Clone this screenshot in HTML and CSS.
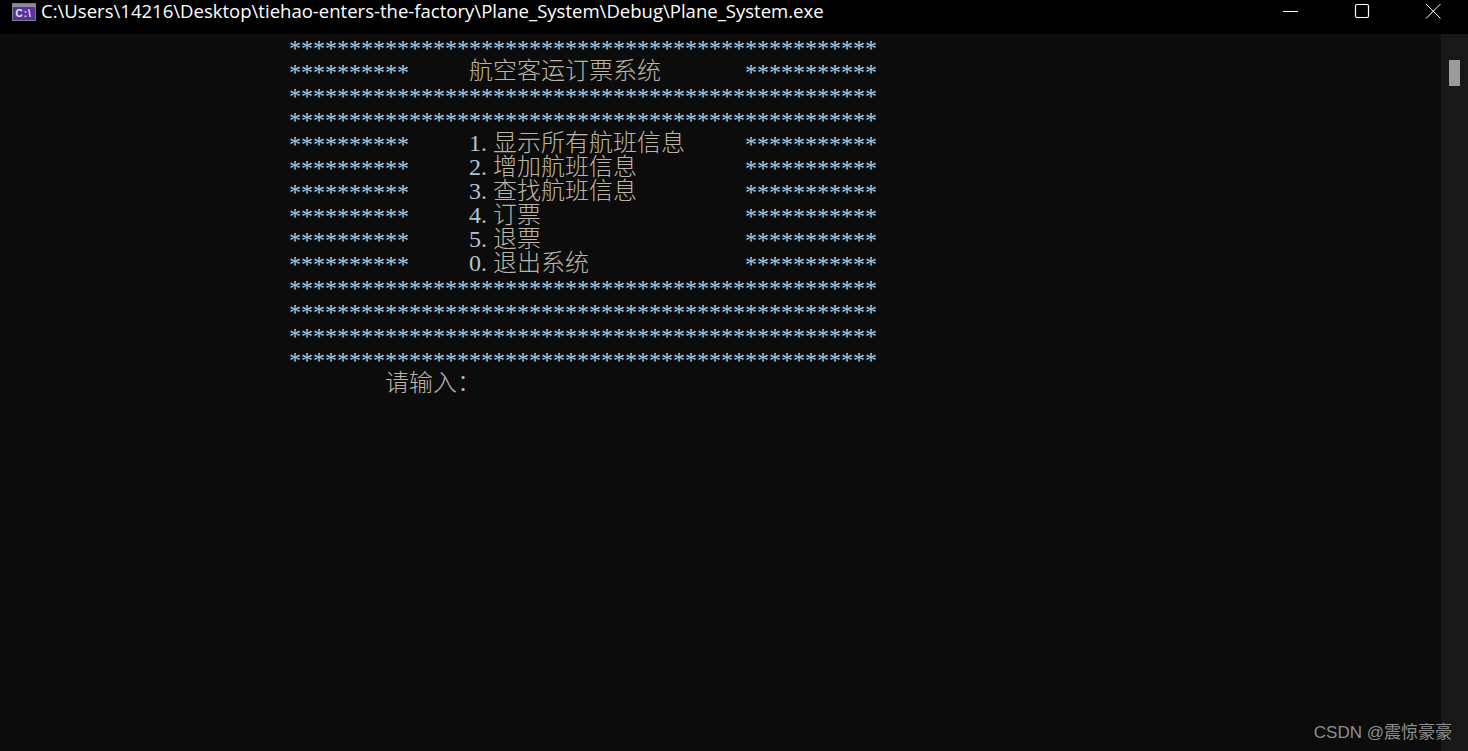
FILE: index.html
```html
<!DOCTYPE html>
<html lang="zh-CN">
<head>
<meta charset="utf-8">
<title>Plane_System</title>
<link rel="stylesheet" href="styles.css">
</head>
<body>
<div class="window">
  <header class="titlebar">
    <svg class="app-icon" width="24" height="18" viewBox="0 0 24 18">
      <rect x="0.5" y="0.5" width="23" height="17" fill="#5a3399" stroke="#7d7b86"/>
      <rect x="1" y="1" width="22" height="3" fill="#8f8aa0"/>
      <text x="3.5" y="14" class="app-icon-text">C:\</text>
    </svg>
    <span class="title">C:\Users\14216\Desktop\tiehao-enters-the-factory\Plane_System\Debug\Plane_System.exe</span>
    <div class="controls">
      <div class="control">
        <svg width="16" height="16" viewBox="0 0 16 16"><path d="M0 8.5H15" stroke="#fff" fill="none"/></svg>
      </div>
      <div class="control">
        <svg width="16" height="16" viewBox="0 0 16 16"><rect x="1.5" y="1.5" width="13" height="13" rx="1.5" stroke="#fff" stroke-width="1.2" fill="none"/></svg>
      </div>
      <div class="control">
        <svg width="16" height="16" viewBox="0 0 16 16"><path d="M1 1L15.5 15.5M15.5 1L1 15.5" stroke="#fff" fill="none"/></svg>
      </div>
    </div>
  </header>
  <div class="content">
    <main class="console">
<div class="line"><span class="stars">*************************************************</span></div>
<div class="line"><span class="stars">**********</span>     <span class="cjk">航空客运订票系统</span>       <span class="stars">***********</span></div>
<div class="line"><span class="stars">*************************************************</span></div>
<div class="line"><span class="stars">*************************************************</span></div>
<div class="line"><span class="stars">**********</span>     <span class="num">1.</span><span class="cjk">显示所有航班信息</span>     <span class="stars">***********</span></div>
<div class="line"><span class="stars">**********</span>     <span class="num">2.</span><span class="cjk">增加航班信息</span>         <span class="stars">***********</span></div>
<div class="line"><span class="stars">**********</span>     <span class="num">3.</span><span class="cjk">查找航班信息</span>         <span class="stars">***********</span></div>
<div class="line"><span class="stars">**********</span>     <span class="num">4.</span><span class="cjk">订票</span>                 <span class="stars">***********</span></div>
<div class="line"><span class="stars">**********</span>     <span class="num">5.</span><span class="cjk">退票</span>                 <span class="stars">***********</span></div>
<div class="line"><span class="stars">**********</span>     <span class="num">0.</span><span class="cjk">退出系统</span>             <span class="stars">***********</span></div>
<div class="line"><span class="stars">*************************************************</span></div>
<div class="line"><span class="stars">*************************************************</span></div>
<div class="line"><span class="stars">*************************************************</span></div>
<div class="line"><span class="stars">*************************************************</span></div>
<div class="line">        <span class="cjk">请输入：</span></div>
    </main>
    <aside class="scrollbar"><div class="thumb"></div></aside>
  </div>
  <div class="watermark">CSDN @震惊豪豪</div>
</div>
</body>
</html>
```
FILE: styles.css
```css
html, body {
  margin: 0;
  padding: 0;
  background: #0c0c0c;
}
.window {
  position: relative;
  width: 1468px;
  height: 751px;
  overflow: hidden;
  display: flex;
  flex-direction: column;
}
.titlebar {
  height: 34px;
  flex: none;
  background: #000;
  display: flex;
  align-items: flex-start;
  padding-left: 12px;
  color: #fff;
}
.app-icon { flex: none; margin-top: 3px; }
.app-icon-text {
  font-family: "Liberation Sans", sans-serif;
  font-size: 10px;
  font-weight: 700;
  letter-spacing: 1px;
  fill: #e8e4f2;
}
.title {
  margin-left: 5px;
  font-family: "Open Sans", sans-serif;
  font-size: 18.55px;
  line-height: 22px;
  white-space: nowrap;
}
.controls {
  margin-left: auto;
  display: flex;
  height: 100%;
}
.control {
  width: 71px;
  display: flex;
  align-items: flex-start;
  justify-content: center;
  padding-top: 3px;
}
.content {
  flex: 1;
  display: flex;
  min-height: 0;
}
.console {
  flex: 1;
  padding: 2px 0 0 289px;
  font-family: "Liberation Mono", monospace;
  font-size: 20px;
  color: #b4bcc4;
}
.line {
  height: 24px;
  line-height: 24px;
  white-space: pre;
}
.stars {
  font-family: "Liberation Serif", serif;
  font-size: 24px;
  line-height: 0;
  vertical-align: -3px;
  color: #b6c6d4;
}
.num {
  display: inline-block;
  width: 24px;
  font-family: "Liberation Serif", serif;
  font-size: 24px;
  line-height: 0;
  vertical-align: -2px;
  color: #b4c4d2;
}
.cjk {
  font-family: "Noto Sans CJK SC", sans-serif;
  font-size: 24px;
  font-weight: 300;
  line-height: 0;
  vertical-align: -2px;
  color: #bdb6a6;
}
.scrollbar {
  width: 27px;
  flex: none;
  background: #181818;
  padding: 26px 8px 0 8px;
  box-sizing: border-box;
}
.thumb {
  width: 11px;
  height: 26px;
  background: #9b9b9b;
}
.watermark {
  position: absolute;
  right: 16px;
  bottom: 8px;
  font-family: "Liberation Sans", "Noto Sans CJK SC", sans-serif;
  font-size: 17px;
  color: #8f8f8f;
}
```
